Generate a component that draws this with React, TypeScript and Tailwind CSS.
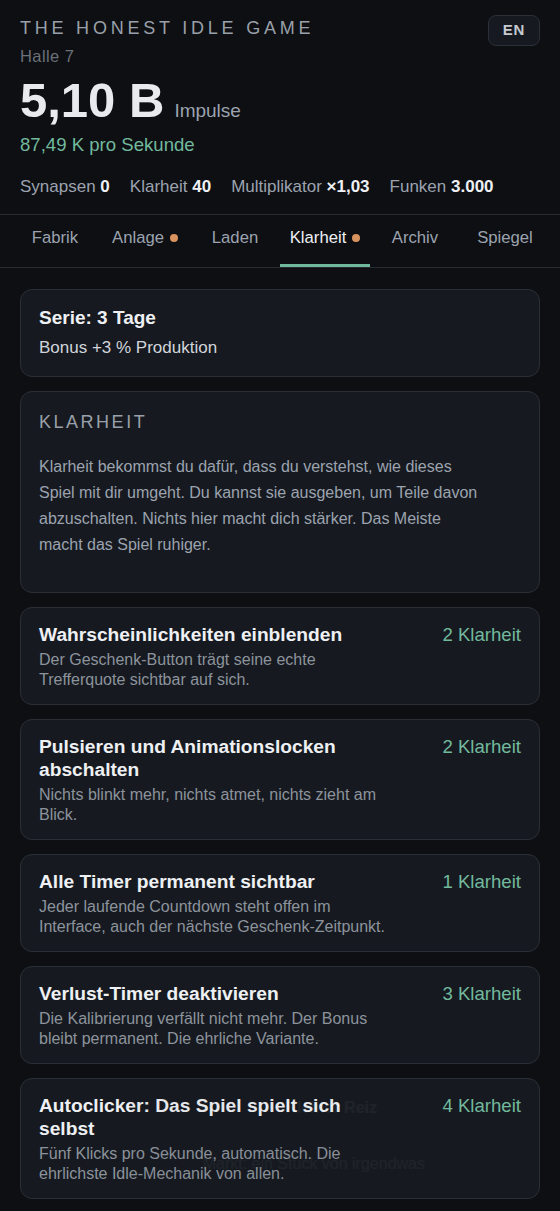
import React, { useState } from 'react';

interface Upgrade {
  title: string;
  desc: string;
  cost: number;
}

const tabs = [
  { label: 'Fabrik', dot: false },
  { label: 'Anlage', dot: true },
  { label: 'Laden', dot: false },
  { label: 'Klarheit', dot: true },
  { label: 'Archiv', dot: false },
  { label: 'Spiegel', dot: false },
];

const upgrades: Upgrade[] = [
  {
    title: 'Wahrscheinlichkeiten einblenden',
    desc: 'Der Geschenk-Button trägt seine echte Trefferquote sichtbar auf sich.',
    cost: 2,
  },
  {
    title: 'Pulsieren und Animationslocken abschalten',
    desc: 'Nichts blinkt mehr, nichts atmet, nichts zieht am Blick.',
    cost: 2,
  },
  {
    title: 'Alle Timer permanent sichtbar',
    desc: 'Jeder laufende Countdown steht offen im Interface, auch der nächste Geschenk-Zeitpunkt.',
    cost: 1,
  },
  {
    title: 'Verlust-Timer deaktivieren',
    desc: 'Die Kalibrierung verfällt nicht mehr. Der Bonus bleibt permanent. Die ehrliche Variante.',
    cost: 3,
  },
  {
    title: 'Autoclicker: Das Spiel spielt sich selbst',
    desc: 'Fünf Klicks pro Sekunde, automatisch. Die ehrlichste Idle-Mechanik von allen.',
    cost: 4,
  },
];

function Stat({ label, value }: { label: string; value: string }) {
  return (
    <span className="text-[#9ca3af]">
      {label} <span className="font-bold text-[#eef0f3]">{value}</span>
    </span>
  );
}

export default function App() {
  const [active, setActive] = useState('Klarheit');

  return (
    <div className="relative min-h-screen bg-[#0d0f13] font-[family-name:'Liberation_Sans',Arial,sans-serif] text-[#e5e7eb]">
      {/* header */}
      <div className="border-b border-[#262a31] px-5 pt-4 pb-[15px]">
        <div className="flex items-start justify-between">
          <div>
            <div className="text-[18px] leading-6 tracking-[0.21em] text-[#9aa0a9]">THE HONEST IDLE GAME</div>
            <div className="mt-1.5 text-[16.5px] leading-5 tracking-wide text-[#6b7079]">Halle 7</div>
          </div>
          <button className="mt-[-1px] h-[31px] w-[52px] rounded-lg border border-[#2b3038] bg-[#161a20] text-[15px] font-bold tracking-wider text-[#c5c9d0]">
            EN
          </button>
        </div>
        <div className="mt-[10px] flex items-baseline gap-2.5">
          <span className="text-[49px] leading-none font-bold text-[#e8eaee]">5,10 B</span>
          <span className="text-[19px] text-[#9ca3af]">Impulse</span>
        </div>
        <div className="mt-[7px] text-[18.6px] leading-6 text-[#72b99d]">87,49 K pro Sekunde</div>
        <div className="mt-[18px] flex gap-5 text-[17px] leading-6">
          <Stat label="Synapsen" value="0" />
          <Stat label="Klarheit" value="40" />
          <Stat label="Multiplikator" value="×1,03" />
          <Stat label="Funken" value="3.000" />
        </div>
      </div>

      {/* tabs */}
      <div className="flex border-b border-[#262a31] px-2.5">
        {tabs.map((t) => (
          <button
            key={t.label}
            onClick={() => setActive(t.label)}
            className={`relative flex h-[52px] flex-1 items-center justify-center pb-[5px] text-[16.7px] ${
              active === t.label ? 'text-[#eef0f3]' : 'text-[#9ca3af]'
            }`}
          >
            {t.label}
            {t.dot && <span className="ml-1.5 h-2 w-2 rounded-full bg-[#d9935e]" />}
            {active === t.label && (
              <span className="absolute right-0 bottom-0 left-0 h-[3px] bg-[#6fb89c]" />
            )}
          </button>
        ))}
      </div>

      {/* content */}
      <div className="space-y-3.5 px-5 pt-[21px] pb-6">
        <div className="rounded-xl border border-[#2a2f37] bg-[#161a20] px-[18px] py-4">
          <div className="text-[19px] leading-6 font-bold text-[#eef0f3]">Serie: 3 Tage</div>
          <div className="mt-1.5 text-[17px] leading-6 text-[#d1d5db]">Bonus +3 % Produktion</div>
        </div>

        <div className="rounded-xl border border-[#2a2f37] bg-[#161a20] px-[18px] pt-[18px] pb-[34px]">
          <div className="text-[18px] leading-6 tracking-[0.14em] text-[#9aa0a9]">KLARHEIT</div>
          <p className="mt-5 max-w-[448px] text-base leading-[26px] text-[#9ca3af]">
            Klarheit bekommst du dafür, dass du verstehst, wie dieses Spiel mit dir umgeht. Du kannst sie
            ausgeben, um Teile davon abzuschalten. Nichts hier macht dich stärker. Das Meiste macht das Spiel
            ruhiger.
          </p>
        </div>

        {upgrades.map((u) => (
          <div
            key={u.title}
            className="flex gap-12 rounded-xl border border-[#2a2f37] bg-[#161a20] px-[18px] pt-[15px] pb-[14px]"
          >
            <div className="min-w-0 flex-1">
              <div className="text-[19.2px] leading-[23px] font-bold text-[#eef0f3]">{u.title}</div>
              <div className="mt-1 text-base leading-5 text-[#8d939c]">{u.desc}</div>
            </div>
            <div className="shrink-0 text-[18.6px] leading-[23px] whitespace-nowrap text-[#72b99d]">
              {u.cost} Klarheit
            </div>
          </div>
        ))}
      </div>

      {/* fading toast */}
      <div className="pointer-events-none absolute top-[1084px] left-[130px] w-[315px] rounded-xl bg-[#2a2f37] px-5 py-3 opacity-[0.04]">
        <div className="pr-12 text-right text-base font-bold text-white">Kleiner Reiz</div>
        <div className="mt-8 text-right text-base text-white">Markt: ein Stück von irgendwas</div>
      </div>
    </div>
  );
}
